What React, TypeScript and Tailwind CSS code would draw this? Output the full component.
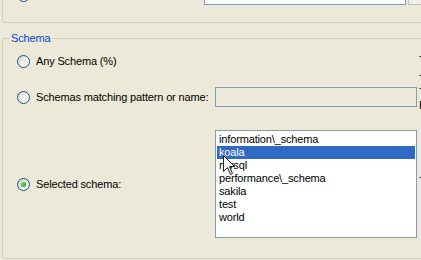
import React from "react";

function Radio({ checked, className = "" }: { checked?: boolean; className?: string }) {
  return (
    <span
      className={
        "flex h-[13px] w-[13px] shrink-0 items-center justify-center rounded-full border border-[#1C5180] bg-[linear-gradient(135deg,#D4D0C4,#F2F1EC_55%,#FFFFFF)] " +
        className
      }
    >
      {checked && <span className="h-[5px] w-[5px] rounded-full bg-[radial-gradient(circle_at_40%_40%,#5FD85F,#1E9A1E)]" />}
    </span>
  );
}

const items = [
  "information\\_schema",
  "koala",
  "mysql",
  "performance\\_schema",
  "sakila",
  "test",
  "world",
];

export default function App() {
  return (
    <div
      className="relative h-[260px] w-[421px] overflow-hidden bg-[#ECE9D8] text-[11px] leading-[13px] tracking-[-0.15px] text-black"
      style={{ fontFamily: '"Liberation Sans", Arial, sans-serif' }}
    >
      {/* top group box (mostly scrolled away) */}
      <div className="ml-[2px] flow-root h-[23px] w-[440px] rounded-bl-[3px] border-b border-l border-[#D0D0BF]">
        <div className="-mt-[16px] flex items-start">
          <Radio className="ml-[14px] mt-[5px]" />
          <div className="ml-[174px] h-[21px] w-[202px] border border-[#7F9DB9] bg-white" />
          <div className="ml-[2px] h-[21px] w-[30px] border border-[#C5C2B2] bg-[#EFEEE8]" />
        </div>
      </div>

      {/* Schema group */}
      <div className="relative ml-[2px] mt-[15px] h-[221px] w-[440px] rounded-[3px] border border-[#D0D0BF]">
        <span className="absolute left-[6px] top-[-7px] bg-[#ECE9D8] px-[2px] text-[#0046D5]">Schema</span>

        <div className="flex flex-col pl-[14px] pt-[16px]">
          {/* row 1 */}
          <div className="flex h-[13px] items-center">
            <div className="flex w-[198px] items-center">
              <Radio />
              <span className="ml-[6px]">Any Schema (%)</span>
            </div>
            <div className="w-[202px]" />
            <span className="-mt-[2px] ml-[2px]">T</span>
          </div>

          {/* row 2 */}
          <div className="mt-[19px] flex h-[20px] items-center">
            <div className="flex w-[198px] items-center">
              <Radio />
              <span className="ml-[6px]">Schemas matching pattern or name:</span>
            </div>
            <div className="h-[20px] w-[202px] border border-[#7F9DB9] bg-[#ECE9D8]" />
            <div className="-mt-[10px] ml-[2px] flex flex-col">
              <span>T</span>
              <span>T</span>
              <span>P</span>
            </div>
          </div>

          {/* row 3 */}
          <div className="mt-[23px] flex h-[108px] items-center">
            <div className="flex w-[198px] items-center">
              <Radio checked />
              <span className="ml-[6px]">Selected schema:</span>
            </div>
            <div className="relative h-[108px] w-[202px] border border-[#7F9DB9] bg-white px-[1px] pt-[2px]">
              {items.map((it, i) => (
                <div
                  key={it}
                  className={
                    "h-[13px] pl-[2px] leading-[13px] whitespace-nowrap " +
                    (i === 1 ? "bg-[#316AC5] text-white" : "")
                  }
                >
                  {it}
                </div>
              ))}
              {/* mouse pointer */}
              <svg
                className="absolute left-[7px] top-[24px]"
                width="13"
                height="21"
                viewBox="0 0 13 21"
              >
                <path
                  d="M0.5 0.5 L0.5 16.5 L4.5 12.5 L7.5 19.5 L9.5 18.5 L6.5 11.5 L11.5 11.5 Z"
                  fill="white"
                  stroke="#222"
                  strokeWidth="1"
                />
              </svg>
            </div>
            <span className="-mt-[6px] ml-[2px]">T</span>
          </div>
        </div>
      </div>
    </div>
  );
}
